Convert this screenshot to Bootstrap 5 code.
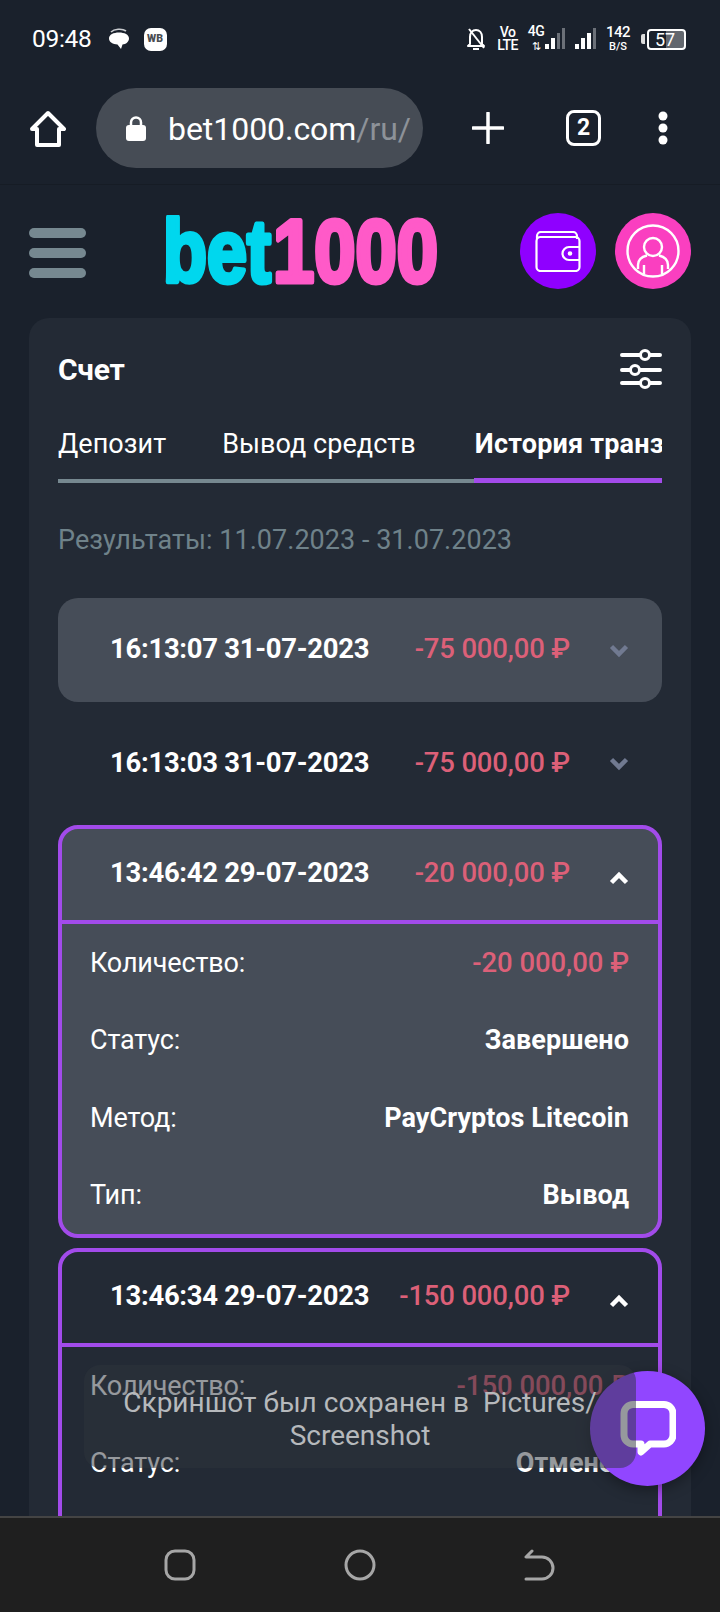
<!doctype html>
<html lang="ru">
<head>
<meta charset="utf-8">
<meta name="viewport" content="width=device-width, initial-scale=1">
<link href="https://cdn.jsdelivr.net/npm/bootstrap@5.3.0/dist/css/bootstrap.min.css" rel="stylesheet">
<style>
html,body{height:1612px;overflow:hidden}
body{background:#1a212c;color:#fff;font-family:Roboto,"Noto Sans",sans-serif;width:720px;position:relative}
.status-strip{height:78px;padding:0 34px 0 32px;position:relative}
.clock{font-size:24.500px;letter-spacing:-.3px;line-height:1;padding-top:1px}
.st-small{font-size:14px;font-weight:500;line-height:13px;text-align:center;letter-spacing:-.6px}
.browser-strip{height:107px;padding:10px 0 0 30px;border-bottom:1px solid #161c25;gap:0}
.url-pill{width:327px;height:80px;border-radius:40px;background:#464c55;margin-left:30px;padding-left:30px;gap:22px;overflow:hidden}
.url-text{font-size:32px;letter-spacing:-.05px;white-space:nowrap;padding-top:2px}
.url-text span{color:#8d9299}
.site-head{height:133px;padding:28px 29px 0}
.burger{width:57px;gap:10px}
.burger i{display:block;height:10px;border-radius:5px;background:#768890}
.logo-svg{margin-left:77px;margin-top:2px}
.round-btn{width:76px;height:76px;border-radius:50%}
.wallet-bg{background:#8f00ff;margin-left:auto}
.user-bg{background:#fa3fc0;margin-left:19px}
.panel{margin:0 29px;background:#232a35;border-radius:20px 20px 0 0;padding:29px 29px 0;height:1198px}
.panel-top{height:44px}
.panel-title{font-size:30px;font-weight:700;letter-spacing:-.3px}
.tabs-wrap{margin-top:33px;position:relative;border-bottom:4px solid #768890}
.tabs-row{height:55px;flex-wrap:nowrap;overflow:hidden;gap:56px;font-size:27px;letter-spacing:.04px;white-space:nowrap}
.tab-on{font-weight:700;letter-spacing:.2px;margin-left:3px}
.tab-mark{position:absolute;left:416px;right:0;bottom:-4px;height:5px;background:#a24bea}
.range-line{margin-top:38px;font-size:27px;color:#6f828a;letter-spacing:.03px;line-height:38px}
.tx-list{margin-top:39px;gap:10px}
.tx{border:4px solid transparent;border-radius:20px}
.tx-open{border-color:#a24bea}
.tx-fill{background:#464d58}
.tx-head{height:95.500px;padding:0 29px 2px 48px;font-size:27.500px;font-weight:700;letter-spacing:-.3px}
.tx-open .tx-head{height:95px;border-bottom:4px solid #a24bea;padding-bottom:3px}
.tx-sum{margin-left:auto;color:#dc6078;font-weight:500;letter-spacing:-.18px}
.tx-arrow{margin-left:39px;width:20px;height:14px;margin-top:4px}
.tx-open .tx-arrow{margin-top:10px}
.tx-body{padding:0 29px 0 28px;height:310px}
.tx-line{height:77.500px;font-size:27px;letter-spacing:-.15px}
.tx-line b{font-weight:700;letter-spacing:.08px}
.tx-line .tx-neg{color:#dc6078;font-weight:500;font-size:27.500px;letter-spacing:-.05px}
.snack{position:absolute;z-index:3;left:84px;top:1365px;width:552px;height:103px;border-radius:16px;background:rgba(46,52,60,.5);color:#b6b9bc;font-size:28px;line-height:33px;letter-spacing:0;text-align:center;padding-top:21px;white-space:nowrap}
.chat-fab{position:absolute;z-index:2;left:590px;top:1371px;width:115px;height:115px;border-radius:50%;background:#9146ff;box-shadow:0 4px 14px rgba(0,0,0,.35)}
.sys-nav{position:absolute;z-index:4;left:0;right:0;top:1516px;height:96px;background:#1f1f1f;border-top:2px solid #444;padding:0}
</style>
</head>
<body>
<div class="status-strip d-flex align-items-center">
  <div class="clock">09:48</div>
  <svg style="margin-left:16px" width="22" height="22" viewBox="0 0 22 22"><path d="M3 4c3-3 11-4 15-1" fill="none" stroke="#c9ccd0" stroke-width="1.600"/><path d="M1 10.500C1 6.500 5.500 4.500 11 4.500s10 2 10 6c0 3.500-3.200 5.700-6.500 6L13 21l-3.500-4.500C5 16.300 1 14 1 10.500z" fill="#fff"/></svg>
  <div class="d-flex align-items-center justify-content-center bg-white" style="margin-left:14px;width:23px;height:23px;border-radius:7px;color:#4a4d52;font-size:10.500px;font-weight:900">WB</div>
  <svg class="ms-auto" width="20" height="24" viewBox="0 0 20 24"><path d="M4 17V10c0-4 2.500-7 6-7s6 3 6 7v7l2 2H2z M7 22h6" fill="none" stroke="#fff" stroke-width="2" stroke-linejoin="round"/><path d="M3 2l15 19" stroke="#fff" stroke-width="2"/></svg>
  <div class="st-small" style="margin-left:11px;width:21px">Vo<br>LTE</div>
  <div class="st-small" style="margin-left:9px;width:18px;line-height:14px">4G<br><span style="font-size:11px">⇅</span></div>
  <svg width="20" height="22" viewBox="0 0 20 22"><rect x="0" y="16" width="4" height="5" fill="#fff"/><rect x="6" y="10" width="4" height="11" fill="#fff"/><rect x="12" y="5" width="3" height="16" fill="#6b7078"/><rect x="17" y="0" width="3" height="21" fill="#6b7078"/></svg>
  <svg style="margin-left:10px" width="22" height="22" viewBox="0 0 22 22"><rect x="0" y="16" width="4" height="5" fill="#fff"/><rect x="6" y="10" width="4" height="11" fill="#fff"/><rect x="12" y="5" width="4" height="16" fill="#fff"/><rect x="18" y="0" width="3" height="21" fill="#6b7078"/></svg>
  <div class="st-small" style="margin-left:9px;width:24px;font-size:15px;line-height:13px">142<br><span style="font-size:11px;letter-spacing:0">B/S</span></div>
  <div style="margin-left:11px;width:4px;height:10px;background:#ddd;border-radius:2px 0 0 2px"></div>
  <div class="position-relative text-center" style="margin-left:2px;width:39px;height:21px;border:2px solid #fff;border-radius:4px;font-size:18px;line-height:17px;background:linear-gradient(90deg,transparent 17px,#62676e 17px);padding-right:3px">57</div>
</div>

<div class="browser-strip d-flex align-items-start">
  <svg width="36" height="37" viewBox="0 0 36 37" style="margin-top:22px"><path d="M2 19 18 3l16 16h-5v16H7V19z" fill="none" stroke="#fff" stroke-width="4" stroke-linejoin="round"/></svg>
  <div class="url-pill d-flex align-items-center">
    <svg width="20" height="25" viewBox="0 0 20 25" class="flex-shrink-0"><path d="M5 10V6.500a5 5 0 0 1 10 0V10" fill="none" stroke="#fff" stroke-width="2.500"/><rect y="9" width="20" height="16" rx="3" fill="#fff"/></svg>
    <div class="url-text">bet1000.com<span>/ru/</span></div>
  </div>
  <svg style="margin:24px 0 0 49px" width="32" height="32" viewBox="0 0 32 32"><path d="M16 1v30M1 16h30" stroke="#fff" stroke-width="3.500" stroke-linecap="round"/></svg>
  <div class="d-flex align-items-center justify-content-center" style="margin:22px 0 0 62px;width:35px;height:36px;border:3.500px solid #fff;border-radius:8px;font-size:23px;font-weight:700">2</div>
  <svg style="margin:23px 0 0 57px" width="10" height="34" viewBox="0 0 10 34"><circle cx="5" cy="5" r="4.500" fill="#fff"/><circle cx="5" cy="17" r="4.500" fill="#fff"/><circle cx="5" cy="29" r="4.500" fill="#fff"/></svg>
</div>

<div class="site-head d-flex align-items-start">
  <div class="burger d-flex flex-column" style="margin-top:15px"><i></i><i></i><i></i></div>
  <svg class="logo-svg" width="276" height="72" viewBox="0 0 276 72" font-family="'Liberation Sans',sans-serif" font-weight="700" font-size="89" stroke-width="5" stroke-linejoin="round">
    <text x="0" y="67" fill="#00d7ee" stroke="#00d7ee" textLength="108" lengthAdjust="spacingAndGlyphs">bet</text>
    <text x="110" y="67" fill="#ff5ac8" stroke="#ff5ac8" textLength="165" lengthAdjust="spacingAndGlyphs">1000</text>
  </svg>
  <div class="round-btn wallet-bg d-flex align-items-center justify-content-center"><svg width="46" height="41" viewBox="0 0 46 41" fill="none" stroke="#fff" stroke-width="2.200" stroke-linejoin="round"><path d="M2 8V5a4 4 0 0 1 4-4h32a4 4 0 0 1 4 4v3"/><rect x="1.500" y="6" width="43" height="34" rx="4"/><path d="M44.500 16H34a6 6 0 0 0 0 13h10.500"/><circle cx="35" cy="22.500" r="1.200" fill="#fff"/></svg></div>
  <div class="round-btn user-bg d-flex align-items-center justify-content-center"><svg width="58" height="58" viewBox="0 0 58 58" fill="none" stroke="#fff" stroke-width="2.400"><circle cx="29" cy="29" r="25.500"/><circle cx="29" cy="25" r="9"/><path d="M14 47v-4c0-5 3-8 9-9.500M44 47v-4c0-5-3-8-9-9.500M20 43v9M38 43v9"/></svg></div>
</div>

<div class="panel">
  <div class="panel-top d-flex align-items-center justify-content-between">
    <div class="panel-title">Счет</div>
    <svg width="42" height="40" viewBox="0 0 42 40" fill="none" stroke="#fff" stroke-width="4"><path d="M2 6h38M2 21h38M2 34h38" stroke-linecap="round"/><circle cx="25" cy="6" r="4.500" fill="#232a35" stroke-width="3"/><circle cx="15" cy="21" r="4.500" fill="#232a35" stroke-width="3"/><circle cx="25" cy="34" r="4.500" fill="#232a35" stroke-width="3"/></svg>
  </div>
  <div class="tabs-wrap">
    <div class="nav tabs-row">
      <div>Депозит</div><div>Вывод средств</div><div class="tab-on">История транзакций</div>
    </div>
    <div class="tab-mark"></div>
  </div>
  <div class="range-line">Результаты: 11.07.2023 - 31.07.2023</div>
  <div class="tx-list d-flex flex-column">
    <div class="tx tx-fill"><div class="tx-head d-flex align-items-center"><span>16:13:07 31-07-2023</span><span class="tx-sum">-75 000,00 ₽</span><svg class="tx-arrow" viewBox="0 0 20 14"><path d="M2.500 2.500 10 10l7.500-7.500" fill="none" stroke="#717a91" stroke-width="4.500"/></svg></div></div>
    <div class="tx"><div class="tx-head d-flex align-items-center"><span>16:13:03 31-07-2023</span><span class="tx-sum">-75 000,00 ₽</span><svg class="tx-arrow" viewBox="0 0 20 14"><path d="M2.500 2.500 10 10l7.500-7.500" fill="none" stroke="#717a91" stroke-width="4.500"/></svg></div></div>
    <div class="tx tx-open tx-fill">
      <div class="tx-head d-flex align-items-center"><span>13:46:42 29-07-2023</span><span class="tx-sum">-20 000,00 ₽</span><svg class="tx-arrow" viewBox="0 0 20 14"><path d="M2.500 11.500 10 4l7.500 7.500" fill="none" stroke="#fff" stroke-width="4.500"/></svg></div>
      <div class="tx-body">
        <div class="tx-line d-flex align-items-center justify-content-between"><span>Количество:</span><b class="tx-neg">-20 000,00 ₽</b></div>
        <div class="tx-line d-flex align-items-center justify-content-between"><span>Статус:</span><b>Завершено</b></div>
        <div class="tx-line d-flex align-items-center justify-content-between"><span>Метод:</span><b>PayCryptos Litecoin</b></div>
        <div class="tx-line d-flex align-items-center justify-content-between"><span>Тип:</span><b>Вывод</b></div>
      </div>
    </div>
    <div class="tx tx-open">
      <div class="tx-head d-flex align-items-center"><span>13:46:34 29-07-2023</span><span class="tx-sum">-150 000,00 ₽</span><svg class="tx-arrow" viewBox="0 0 20 14"><path d="M2.500 11.500 10 4l7.500 7.500" fill="none" stroke="#fff" stroke-width="4.500"/></svg></div>
      <div class="tx-body">
        <div class="tx-line d-flex align-items-center justify-content-between"><span>Количество:</span><b class="tx-neg">-150 000,00 ₽</b></div>
        <div class="tx-line d-flex align-items-center justify-content-between"><span>Статус:</span><b>Отменен</b></div>
      </div>
    </div>
  </div>
</div>

<div class="chat-fab d-flex align-items-center justify-content-center"><svg width="56" height="56" viewBox="0 0 56 56" fill="none"><path d="M13 3.500h31a9 9 0 0 1 9 9V34a9 9 0 0 1-9 9H30L21 51V43h-8a9 9 0 0 1-9-9V12.500a9 9 0 0 1 9-9z" stroke="#fff" stroke-width="7" stroke-linejoin="round"/></svg></div>
<div class="snack">Скриншот был сохранен в&nbsp; Pictures/<br>Screenshot</div>

<div class="sys-nav">
  <svg class="position-absolute" style="left:164px;top:31px" width="32" height="32" viewBox="0 0 32 32" fill="none" stroke="#a6a6a6" stroke-width="3"><rect x="2" y="2" width="28" height="28" rx="9"/></svg>
  <svg class="position-absolute" style="left:344px;top:31px" width="32" height="32" viewBox="0 0 32 32" fill="none" stroke="#a6a6a6" stroke-width="3"><circle cx="16" cy="16" r="14"/></svg>
  <svg class="position-absolute" style="left:523px;top:31px" width="32" height="32" viewBox="0 0 32 32" fill="none" stroke="#a6a6a6" stroke-width="3" stroke-linecap="round" stroke-linejoin="round"><path d="M9 2 3 8h16a11 11 0 0 1 0 22H3"/></svg>
</div>
</body>
</html>
